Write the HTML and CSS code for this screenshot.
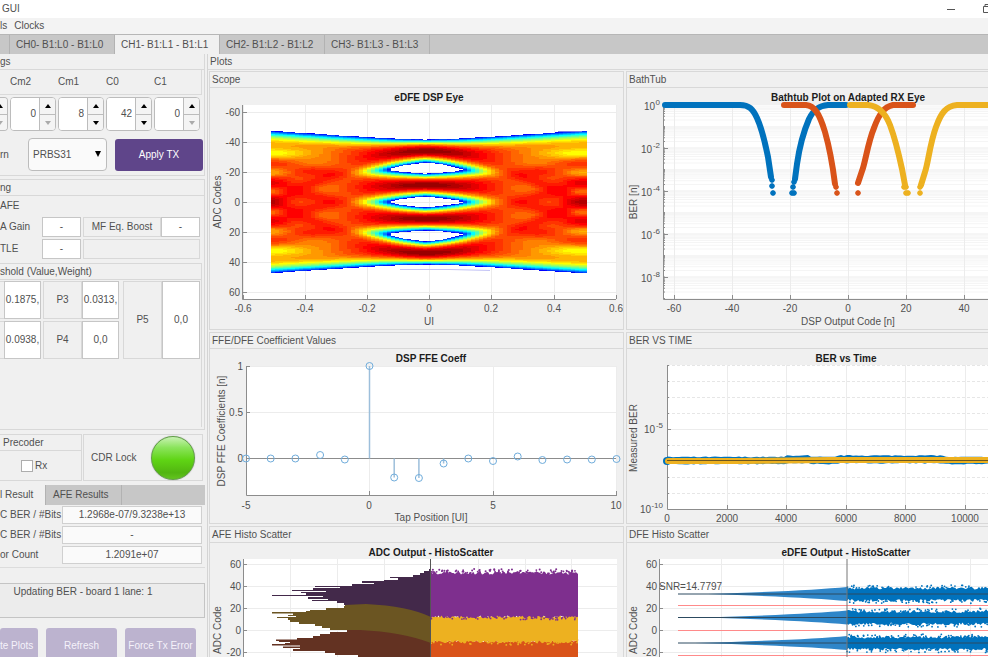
FILE: index.html
```html
<!DOCTYPE html>
<html lang="en">
<head>
<meta charset="utf-8">
<title>GUI</title>
<link rel="stylesheet" href="styles.css">
</head>
<body>
<header class="titlebar">
  <span>GUI</span>
  <svg class="winctl" width="42" height="18" viewBox="0 0 42 18"><path d="M1 9.500h8" /><path d="M37.500 6.500h7v6h-7zM39 6V4.500h6" /></svg>
</header>
<nav class="menubar"><a href="#">ls</a><a href="#">Clocks</a></nav>
<div class="tabs channels">
  <button class="tab stub" aria-label="Previous"></button>
  <button class="tab">CH0- B1:L0 - B1:L0</button>
  <button class="tab active">CH1- B1:L1 - B1:L1</button>
  <button class="tab">CH2- B1:L2 - B1:L2</button>
  <button class="tab">CH3- B1:L3 - B1:L3</button>
</div>

<div class="workspace">
<aside class="sidebar">
  <section class="group">
    <h2 class="head">gs</h2>
    <div class="taplabels"><label for="cm2">Cm2</label><label for="cm1">Cm1</label><label for="c0">C0</label><label for="c1">C1</label></div>
    <div class="spinners">
      <div class="spinner cut"><div class="steps"><button aria-label="up"><i class="up"></i></button><button aria-label="down"><i class="down off"></i></button></div></div>
      <div class="spinner"><input id="cm2" type="number" value="0"><div class="steps"><button aria-label="up"><i class="up"></i></button><button aria-label="down"><i class="down off"></i></button></div></div>
      <div class="spinner"><input id="cm1" type="number" value="8"><div class="steps"><button aria-label="up"><i class="up"></i></button><button aria-label="down"><i class="down"></i></button></div></div>
      <div class="spinner"><input id="c0" type="number" value="42"><div class="steps"><button aria-label="up"><i class="up"></i></button><button aria-label="down"><i class="down"></i></button></div></div>
      <div class="spinner"><input id="c1" type="number" value="0"><div class="steps"><button aria-label="up"><i class="up"></i></button><button aria-label="down"><i class="down off"></i></button></div></div>
    </div>
    <div class="pattern">
      <label for="pat">rn</label>
      <div class="drop"><select id="pat"><option>PRBS31</option></select><i class="down big"></i></div>
      <button class="primary">Apply TX</button>
    </div>
  </section>

  <section class="group tuning">
    <h2 class="head">ng</h2>
    <p class="caption">AFE</p>
    <div class="afe">
      <label for="gain">A Gain</label><input id="gain" type="text" value="-">
      <label class="boxed" for="boost">MF Eq. Boost</label><input id="boost" type="text" value="-">
      <label for="ctle">TLE</label><input id="ctle" type="text" value="-">
      <div class="boxed blank"></div>
    </div>
    <div class="threshold">
      <h3 class="head">shold (Value,Weight)</h3>
      <div class="levels">
        <span class="edge"></span><input type="text" aria-label="P1" value="0.1875,">
        <label class="boxed" for="p3">P3</label><input id="p3" type="text" value="0.0313,">
        <label class="boxed tall" for="p5">P5</label><input class="tall" id="p5" type="text" value="0,0">
        <span class="edge"></span><input type="text" aria-label="P2" value="0.0938,">
        <label class="boxed" for="p4">P4</label><input id="p4" type="text" value="0,0">
      </div>
    </div>
  </section>

  <section class="locks">
    <div class="precoder"><h2 class="head">Precoder</h2><label class="check"><input type="checkbox">Rx</label></div>
    <div class="cdr"><span>CDR Lock</span><span class="lamp"></span></div>
  </section>

  <section>
    <div class="tabs results"><button class="tab active">l Result</button><button class="tab">AFE Results</button></div>
    <div class="readouts">
      <label for="r1">C BER / #Bits</label><input id="r1" type="text" value="1.2968e-07/9.3238e+13">
      <label for="r2">C BER / #Bits</label><input id="r2" type="text" value="-">
      <label for="r3">or Count</label><input id="r3" type="text" value="1.2091e+07">
    </div>
  </section>

  <section class="status"><div class="bar"></div><output>Updating BER - board 1 lane: 1</output></section>
  <div class="actions"><button>te Plots</button><button>Refresh</button><button>Force Tx Error</button></div>
</aside>

<main class="plots">
  <h2 class="head">Plots</h2>
  <div class="grid">
    <section class="panel"><h3 class="head">Scope</h3><svg id="eye" viewBox="210 88 413 241"></svg></section>
    <section class="panel last"><h3 class="head">BathTub</h3><svg id="bath" viewBox="627 88 361 241"></svg></section>
    <section class="panel"><h3 class="head">FFE/DFE Coefficient Values</h3><svg id="ffe" viewBox="210 349 413 174"></svg></section>
    <section class="panel last"><h3 class="head">BER VS TIME</h3><svg id="ber" viewBox="627 349 361 174"></svg></section>
    <section class="panel"><h3 class="head">AFE Histo Scatter</h3><svg id="afe" viewBox="210 543 413 116"></svg></section>
    <section class="panel last"><h3 class="head">DFE Histo Scatter</h3><svg id="dfe" viewBox="627 543 361 116"></svg></section>
  </div>
</main>
</div>
<script src="charts.js"></script>
</body>
</html>
```
FILE: styles.css
```css
* { box-sizing: border-box; }
html, body { height: 100%; }
body {
  margin: 0; overflow: hidden; background: #f0f0f0; color: #505050;
  font: 10px/12px "Liberation Sans", Arial, sans-serif;
  display: flex; flex-direction: column;
}
h2, h3, p { margin: 0; font-size: 10px; font-weight: normal; }
button, input, select { font: inherit; color: inherit; margin: 0; padding: 0; border-radius: 0; }
input[type="text"], input[type="number"] { appearance: textfield; min-width: 0; width: 100%; border: 1px solid #c6c6c6; background: #fff; outline: 0; text-align: center; }
input[type="number"]::-webkit-inner-spin-button { appearance: none; }

.titlebar { flex: none; height: 18px; background: #fff; padding-left: 2px; display: flex; justify-content: space-between; align-items: center; }
.winctl { fill: none; stroke: #555; stroke-width: 1; }
.menubar { flex: none; height: 16px; background: #f3f3f3; display: flex; gap: 7px; align-items: center; }
.menubar a { color: inherit; text-decoration: none; }

.tabs { flex: none; display: flex; background: #c7c7c7; }
.tab { border: 0; border-right: 1px solid #b2b2b2; background: #c7c7c7; text-align: left; padding: 0 6px; white-space: nowrap; }
.tab.active { background: #f0f0f0; }
.channels { height: 20px; border-top: 1px solid #b6b6b6; }
.channels .tab { width: 105px; }
.channels .stub { width: 10px; padding: 0; }

.workspace { flex: 1; min-height: 0; display: flex; }
.head { height: 16px; line-height: 15px; border-bottom: 1px solid #d8d8d8; white-space: nowrap; }

.sidebar { flex: none; width: 205px; }
.group { border-right: 1px solid #d8d8d8; border-bottom: 1px solid #d8d8d8; }
.taplabels { display: grid; grid-template-columns: repeat(4, 48px); height: 25px; line-height: 24px; padding-left: 10px; margin-right: 2px; border-right: 1px solid #dadada; border-bottom: 1px solid #dadada; }
.spinners { display: flex; gap: 2px; height: 34px; margin-top: 2px; }
.spinner { width: 46px; display: flex; border: 1px solid #bcbcbc; border-radius: 4px; background: #fafafa; overflow: hidden; }
.spinner.cut { width: 8px; border-left: 0; border-radius: 0 4px 4px 0; justify-content: flex-end; }
.spinner input[type="number"] { width: 28px; border: 0; text-align: right; padding-right: 3px; background: #fff; }
.steps { flex: none; width: 16px; display: grid; grid-template-rows: 1fr 1fr; border-left: 1px solid #bcbcbc; background: #f4f4f4; }
.steps button { border: 0; background: none; display: flex; align-items: center; justify-content: center; }
.steps button + button { border-top: 1px solid #bcbcbc; }
.up, .down { width: 0; height: 0; border: 3px solid transparent; }
.up { border-top: 0; border-bottom: 4px solid #000; }
.down { border-bottom: 0; border-top: 4px solid #000; }
.down.off { border-top-color: #aaa; }
.down.big { border-top-width: 6px; position: absolute; right: 6px; top: 13px; pointer-events: none; }
.pattern { display: flex; align-items: center; height: 41px; padding-right: 1px; margin-top: 3px; }
.pattern label { width: 28px; }
.drop { position: relative; width: 79px; height: 33px; }
.drop select { appearance: none; width: 100%; height: 100%; border: 1px solid #bcbcbc; border-radius: 4px; background: #fafafa; padding-left: 4px; }
.primary { flex: 1; height: 32px; margin-left: 8px; border: 0; border-radius: 3px; background: #5f458a; color: #fff; }

.tuning { margin-top: 3px; height: 251px; border-top: 1px solid #d8d8d8; }
.caption { height: 21px; line-height: 20px; }
.afe { display: grid; grid-template-columns: 42px 39px 80px 39px; grid-auto-rows: 20px; row-gap: 2px; }
.afe label { line-height: 20px; white-space: nowrap; }
.boxed { border: 1px solid #d8d8d8; margin-left: 2px; text-align: center; }
.afe .boxed { line-height: 18px; }
.blank { grid-column: span 2; }
.threshold { height: 164px; margin: 4px 2px 0 0; border: solid #d8d8d8; border-width: 1px 1px 0 0; }
.levels { display: grid; grid-template-columns: 4px 37px 41px 37px 43px 38px; grid-template-rows: 38px 38px; row-gap: 2px; margin-top: 1px; }
.levels .boxed { line-height: 36px; }
.levels .edge { border: solid #d8d8d8; border-width: 1px 0; }
.levels .tall { grid-row: 1 / span 2; }
.levels input.tall { grid-column: 6; }
.levels label.tall { grid-column: 5; line-height: 76px; margin-left: 4px; }

.locks { display: grid; grid-template-columns: 82px 120px; gap: 1px; margin-top: 4px; height: 47px; }
.precoder, .cdr { border: 1px solid #d8d8d8; }
.precoder { border-left: 0; }
.precoder .head { padding-left: 3px; }
.check { display: flex; align-items: center; gap: 2px; height: 29px; padding-left: 21px; }
.check input { appearance: none; width: 12px; height: 12px; border: 1px solid #adadad; background: #fff; }
.cdr { display: flex; align-items: center; justify-content: space-between; padding: 0 7px; }
.lamp { width: 44px; height: 44px; border-radius: 50%; border: 1px solid #5f9e44; background: linear-gradient(#c9f2b4, #8be45c 25%, #5fd414 55%, #52b511 85%, #63c41f); box-shadow: 0 0 1px #777; }

.results { height: 20px; margin-top: 4px; }
.results .tab { width: 76px; padding: 0 7px; }
.results .tab.active { width: 46px; padding: 0; }
.readouts { display: grid; grid-template-columns: 62px 140px; grid-auto-rows: 18px; row-gap: 2px; padding-top: 1px; }
.readouts label { line-height: 18px; white-space: nowrap; }
.readouts input[type="text"] { background: #fafafa; border-color: #d0d0d0; }

.status { margin-top: 3px; border-top: 1px solid #dcdcdc; }
.bar { height: 15px; }
.status output { display: block; height: 35px; border: 1px solid #c4c4c4; border-left: 0; background: #ececec; text-align: center; padding: 2px 38px 0 0; white-space: nowrap; }
.actions { display: flex; gap: 8px; margin-top: 10px; }
.actions button { width: 71px; height: 36px; border: 0; border-radius: 3px; background: #bcb3cf; color: #f5f2fa; white-space: nowrap; }
.actions button:first-child { width: 38px; text-align: left; }

.plots { flex: 1; min-width: 0; margin-left: 2px; border-left: 1px solid #d4d4d4; }
.plots > .head { padding-left: 2px; }
.grid { display: grid; grid-template-columns: minmax(0, 415fr) minmax(0, 362fr); gap: 2px; padding: 1px 0 0 1px; align-items: start; }
.panel { border: 1px solid #d8d8d8; }
.panel.last { border-right: 0; }
.panel .head { padding-left: 2px; }
.panel svg { display: block; width: 100%; height: auto; font-size: 10px; fill: #505050; }

.face { fill: #fff; }
.gridline { stroke: #ececec; fill: none; }
.minor { stroke: #f5f5f5; fill: none; }
.dashed { stroke: #e6e6e6; stroke-dasharray: 3 2; fill: none; }
.axis { stroke: #8c8c8c; fill: none; }
.title { font-weight: bold; fill: #1c1c1c; text-anchor: middle; }
.mid { text-anchor: middle; }
.end { text-anchor: end; }
.sup { font-size: 8px; }
.curve { fill: none; stroke-width: 6; stroke-linecap: round; stroke-linejoin: round; }
.stem { stroke: #9dbfdb; fill: none; }
.marker { stroke: #6facdb; fill: none; }
```
FILE: charts.js
```js
const NS = 'http://www.w3.org/2000/svg';
function add(svg, tag, attrs, text) {
  const e = document.createElementNS(NS, tag);
  for (const k in attrs) e.setAttribute(k, attrs[k]);
  if (text !== undefined) e.textContent = text;
  svg.appendChild(e);
  return e;
}
const get = id => document.getElementById(id);
const line = (s, d, cls, extra) => add(s, 'path', Object.assign({ d, class: cls }, extra));
const label = (s, x, y, t, cls) => add(s, 'text', { x, y, class: cls }, t);
const vlabel = (s, x, y, t) => add(s, 'text', { x, y, class: 'mid', transform: `rotate(-90 ${x} ${y})` }, t);
function power(s, x, y, exp) {
  label(s, x - (exp.length > 2 ? 12 : exp.length > 1 ? 8 : 5), y + 4, '10', 'end');
  label(s, x, y - 1, exp, 'end sup');
}
let seed = 7;
const rnd = () => (seed = (seed * 16807) % 2147483647) / 2147483647;

// Eye diagram: density of PAM4 trajectories on a log colour scale
(function () {
  const s = get('eye');
  add(s, 'rect', { x: 243, y: 105, width: 373, height: 194, class: 'face' });
  const xs = [243, 305, 367, 429, 491, 554, 616], ys = [112, 142, 172, 202, 232, 262, 292];
  xs.forEach(x => line(s, `M${x}.5 105V299`, 'gridline'));
  ys.forEach(y => line(s, `M243 ${y}.5H616`, 'gridline'));
  const jet = v => {
    const c = o => Math.round(255 * Math.max(0, Math.min(1, 1.5 - Math.abs(4 * v - o))));
    return `rgb(${c(3)},${c(2)},${c(1)})`;
  };
  const lv = [-34, -11.3, 11.3, 34], g = add(s, 'g', { 'shape-rendering': 'crispEdges' });
  for (let i = 0; i < 79; i++) {
    const px = 271 + i * 4, u = Math.min(0.5, Math.abs((px + 2 - 426) / 311));
    const t = 0.5 * Math.pow(u * 2, 1.35), sg = 2.4 + 1.2 * Math.pow(u * 2, 0.7);
    let prev = null, start = 0;
    for (let y = 129; y <= 275; y++) {
      const code = (y + 0.5 - 202) / 1.5;
      let d = 0;
      for (const a of lv) for (const b of lv) {
        const m = (a + (b - a) * t) * (1 + 0.12 * Math.pow(u * 2, 1.2));
        const z = (code - m) / sg;
        d += Math.exp(-z * z / 2) / 4 * Math.pow(2.4 / sg, 0.6);
      }
      let v = 0.99 + 0.4 * Math.log10(d + 1e-9);
      if (v > 0.1 && v < 0.2) v += (rnd() - 0.5) * 0.04;
      const q = v < 0.11 || y === 275 ? null : Math.round(v * 40) / 40;
      if (q !== prev) {
        if (prev !== null) add(g, 'rect', { x: px, y: start, width: 4, height: y - start, fill: jet(prev) });
        prev = q; start = y;
      }
    }
  }
  line(s, 'M558 131.500H582', '', { stroke: '#7a7aec', fill: 'none' });
  line(s, 'M400 269.500H450L490 270.500', '', { stroke: '#c4c4f6', fill: 'none' });
  line(s, 'M242.500 105V299.500H616', 'axis');
  xs.forEach((x, i) => { line(s, `M${x}.5 299v-4`, 'axis'); label(s, x, 312, ['-0.6', '-0.4', '-0.2', '0', '0.2', '0.4', '0.6'][i], 'mid'); });
  ys.forEach((y, i) => { line(s, `M243 ${y}.5h4`, 'axis'); label(s, 240, y + 4, ['-60', '-40', '-20', '0', '20', '40', '60'][i], 'end'); });
  label(s, 429, 101, 'eDFE DSP Eye', 'title');
  label(s, 429, 325, 'UI', 'mid');
  vlabel(s, 221, 202, 'ADC Codes');
})();

// Bathtub curves on a log scale, 21.5 px per decade
(function () {
  const s = get('bath');
  add(s, 'rect', { x: 663, y: 105, width: 325, height: 194, class: 'face' });
  for (let k = 0; k < 9; k++) for (let m = 1; m < 10; m++) {
    const y = 105 + 21.5 * (k + 1 - Math.log10(m));
    line(s, `M663 ${y}H988`, m === 1 && k % 2 ? 'gridline' : 'minor');
    line(s, `M663 ${y}h2`, 'axis');
  }
  const xs = [674, 732, 790, 848, 906, 964];
  xs.forEach((x, i) => {
    line(s, `M${x}.5 105V299`, 'gridline'); line(s, `M${x}.5 299v-4`, 'axis');
    label(s, x, 312, ['-60', '-40', '-20', '0', '20', '40'][i], 'mid');
  });
  line(s, 'M663.500 105V299.500H988', 'axis');
  ['0', '-2', '-4', '-6', '-8'].forEach((e, i) => { line(s, `M663 ${105.5 + 43 * i}h5`, 'axis'); power(s, 660, 106 + 43 * i, e); });
  label(s, 848, 101, 'Bathtub Plot on Adapted RX Eye', 'title');
  const B = '#0072bd', O = '#d95319', Y = '#edb120';
  const curves = [
    [B, 'M665 105H740C749 105 753 109 757 118C763 131 766 148 768 157L771 177'],
    [B, 'M846 105H828C819 106 814 109 809 119C803 133 799 150 797 164L795 179'],
    [O, 'M784 105H806C814 106 819 112 825 132C829 146 832 160 835 184'],
    [O, 'M913 105H893C884 107 879 114 874 128C868 142 865 164 862 171L858 183'],
    [Y, 'M850 105H868C878 106 885 112 890 125C896 141 899 155 902 169L905 185'],
    [Y, 'M990 105H957C946 106 941 113 936 127C930 143 928 164 925 172L921 185']
  ];
  curves.forEach(c => line(s, c[1], 'curve', { stroke: c[0] }));
  const star = (x, y, c) => line(s, `M${x - 3} ${y}h6M${x} ${y - 3}v6M${x - 2} ${y - 2}l4 4M${x + 2} ${y - 2}l-4 4`, '', { stroke: c, 'stroke-width': 1.5 });
  [[772, 180, B], [772, 186, B], [773, 193, B], [794, 182, B], [793, 187, B], [792, 193, B], [794, 193, B], [836, 187, O], [837, 193, O], [858, 193, O], [904, 187, Y], [906, 187, Y], [906, 193, Y], [908, 193, Y], [920, 187, Y], [920, 193, Y]].forEach(p => star(...p));
  label(s, 848, 325, 'DSP Output Code [n]', 'mid');
  vlabel(s, 637, 202, 'BER [n]');
})();

// Equaliser taps
(function () {
  const s = get('ffe');
  add(s, 'rect', { x: 246, y: 366, width: 371, height: 129, class: 'face' });
  const xs = [246, 369, 493, 616];
  xs.forEach((x, i) => { line(s, `M${x}.5 366V495`, 'gridline'); line(s, `M${x}.5 495v-4`, 'axis'); label(s, x, 509, ['-5', '0', '5', '10'][i], 'mid'); });
  [366, 412, 458].forEach((y, i) => { line(s, `M246 ${y}.5H616`, 'gridline'); line(s, `M246 ${y}.5h4`, 'axis'); label(s, 243, y + 4, ['1', '0.5', '0'][i], 'end'); });
  line(s, 'M246.500 366V495.500H617M246 458.500H616', 'axis');
  const taps = [458.5, 458.5, 458.5, 455, 459.5, 366, 477.5, 478, 463.5, 458.5, 461, 456.5, 460, 459.5, 459.5, 459];
  taps.forEach((y, i) => {
    const x = 246 + i * 24.7;
    if (Math.abs(y - 458.5) > 4) line(s, `M${x} 458.5V${y}`, 'stem', { 'stroke-width': 1.5 });
    add(s, 'circle', { cx: x, cy: y, r: 3.5, class: 'marker' });
  });
  label(s, 431, 362, 'DSP FFE Coeff', 'title');
  label(s, 431, 521, 'Tap Position [UI]', 'mid');
  vlabel(s, 225, 431, 'DSP FFE Coefficients [n]');
})();

// BER history
(function () {
  const s = get('ber');
  add(s, 'rect', { x: 667, y: 365, width: 321, height: 144, class: 'face' });
  for (let i = 0; i < 9; i++) { line(s, `M667 ${365.5 + 16 * i}H988`, i === 4 ? 'gridline' : 'dashed'); line(s, `M667 ${365.5 + 16 * i}h${i === 4 ? 4 : 2}`, 'axis'); }
  ['0', '2000', '4000', '6000', '8000', '10000'].forEach((t, i) => {
    const x = Math.round(667 + 59.5 * i);
    line(s, `M${x}.5 365V509`, 'gridline'); line(s, `M${x}.5 509v-4`, 'axis'); label(s, x, 522, t, 'mid');
  });
  line(s, 'M667.500 365V509.500H988', 'axis');
  power(s, 663, 429, '-5'); power(s, 663, 509, '-10');
  let top = '', bot = '';
  for (let x = 667; x <= 990; x += 3) {
    const lift = (x > 785 && x < 810) || (x > 835 && x < 945) ? 1.5 : 0;
    top += `${x},${457.5 - lift - rnd()} `; bot = `${x},${463.5 - lift / 2 + rnd()} ` + bot;
  }
  add(s, 'circle', { cx: 667, cy: 461, r: 4, fill: '#0072bd' });
  add(s, 'polygon', { points: top + bot, fill: '#0072bd' });
  line(s, 'M668 461H740L830 460H990', 'curve', { stroke: '#edb120' });
  line(s, 'M667 460.500H990', '', { stroke: '#6b5722', fill: 'none' });
  label(s, 846, 362, 'BER vs Time', 'title');
  vlabel(s, 637, 438, 'Measured BER');
})();

function histoAxes(s, left, right, xs, title, cx, ylab) {
  add(s, 'rect', { x: left, y: 559, width: right - left, height: 100, class: 'face' });
  xs.forEach(x => line(s, `M${x}.5 559V660`, 'gridline'));
  [564, 586, 608, 630, 652].forEach((y, i) => {
    line(s, `M${left} ${y}.5H${right}`, 'gridline'); line(s, `M${left} ${y}.5h4`, 'axis');
    label(s, left - 2, y + 4, ['60', '40', '20', '0', '-20'][i], 'end');
  });
  line(s, `M${left}.5 559V660`, 'axis');
  label(s, cx, 556, title, 'title');
  vlabel(s, ylab, 630, 'ADC Code');
}
function ragged(s, x0, x1, y0, y1, amp, color) {
  let a = '', b = '';
  for (let x = x0; x <= x1; x += 1.5) { a += `${x},${y0 + (rnd() - 0.5) * amp} `; b = `${x},${y1 + (rnd() - 0.5) * amp} ` + b; }
  add(s, 'polygon', { points: a + b, fill: color });
  for (let i = 0; i < (x1 - x0) / 2; i++) {
    const up = rnd() < 0.5;
    add(s, 'circle', { cx: x0 + rnd() * (x1 - x0), cy: up ? y0 - rnd() * amp : y1 + rnd() * amp, r: 0.9, fill: color });
  }
}

// ADC output: stepped histograms on the left, samples on the right
(function () {
  const s = get('afe');
  histoAxes(s, 243, 617, [290, 337, 384, 478, 525, 571], 'ADC Output - HistoScatter', 431, 221);
  ragged(s, 431, 578, 641, 662, 2, '#d95319');
  ragged(s, 431, 578, 616, 642, 3, '#edb120');
  ragged(s, 431, 578, 573, 617, 3, '#7e2f8e');
  for (let i = 0; i < 60; i++) add(s, 'circle', { cx: 432 + rnd() * 145, cy: 569 + rnd() * 5, r: 1, fill: '#7e2f8e' });
  const steps = (rows, tail, color) => {
    let d = `M431 ${rows[0][0]}`;
    rows.forEach((r, i) => { d += `V${r[0]}H${r[1]}`; if (i === rows.length - 1) d += `V${r[0] + 2}`; });
    add(s, 'path', { d: d + tail, fill: color });
  };
  steps([[569, 429], [571, 424], [573, 420], [575, 413], [577, 390], [578, 398], [580, 384], [581, 362], [583, 374], [584, 352], [586, 315], [587, 340], [588, 313], [590, 292], [591, 326], [592, 301], [593, 306], [595, 272], [596, 323], [597, 308], [599, 328], [600, 312], [601, 337], [603, 344], [605, 362], [607, 390], [611, 410], [615, 425]], 'H431Z', '#43294a');
  steps([[605, 345], [606, 344], [608, 326], [610, 310], [611, 306], [612, 272], [613.5, 293], [615, 288], [616, 296], [617, 277], [618, 288], [620, 290], [622, 299], [624, 315], [626, 322], [628, 330], [630, 354]], 'Q396 632 431 645V617Q408 606 366 604L345 605Z', '#6b5522');
  steps([[630, 347], [632, 330], [634, 320], [636, 313], [638, 297], [639.5, 276], [641, 279], [642, 290], [643, 285], [644, 272], [645.5, 300], [646.5, 283], [648, 300], [649, 293], [651, 325], [653, 335], [655, 358], [657, 372]], 'L431 660V643Q402 632 360 630Z', '#633222');
  line(s, 'M430.500 559V660', '', { stroke: '#555', fill: 'none' });
})();

// DFE output: three lanes with decision thresholds
(function () {
  const s = get('dfe');
  histoAxes(s, 659, 988, [721, 783, 908, 970], 'eDFE Output - HistoScatter', 846, 637);
  [594, 617.5, 643].forEach((y, i) => {
    const x0 = [708, 704, 695][i];
    add(s, 'path', { d: `M${x0} ${y}Q805 ${y - 3} 847 ${y - 7}V${y + 7}Q805 ${y + 3} ${x0} ${y}Z`, fill: '#2f86c9' });
    ragged(s, 847, 990, y - 6, y + 6.5, 3, '#0072bd');
    line(s, `M678 ${y}H990`, '', { stroke: '#2c4a60', fill: 'none' });
  });
  [605.5, 630.5, 655.5].forEach(y => line(s, `M678 ${y}H990`, '', { stroke: '#ff8a8a', fill: 'none' }));
  line(s, 'M847 559V660', '', { stroke: '#777', fill: 'none' });
  label(s, 659, 590, 'SNR=14.7797', '');
})();
```
